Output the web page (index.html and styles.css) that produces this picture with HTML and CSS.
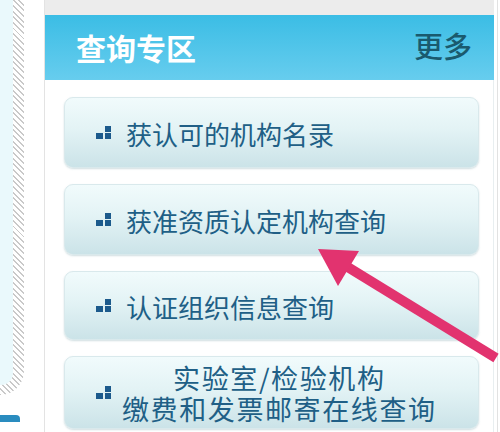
FILE: index.html
```html
<!DOCTYPE html>
<html lang="zh-CN">
<head>
<meta charset="utf-8">
<title>查询专区</title>
<link rel="stylesheet" href="styles.css">
</head>
<body>
<div class="page">
  <aside class="side">
    <div class="hatch"><div class="fill"></div></div>
    <div class="tab"></div>
  </aside>
  <main class="panel">
    <div class="topbar"></div>
    <header class="head">
      <span class="title">查询专区</span>
      <span class="more">更多</span>
    </header>
    <div class="body">
      <a class="btn b1"><svg class="ico" width="15" height="13" viewBox="0 0 15 13"><rect x="9" y="0" width="6" height="6"/><rect x="0" y="7" width="7" height="6"/><rect x="9" y="7" width="6" height="6"/></svg><span class="txt">获认可的机构名录</span></a>
      <a class="btn b2"><svg class="ico" width="15" height="13" viewBox="0 0 15 13"><rect x="9" y="0" width="6" height="6"/><rect x="0" y="7" width="7" height="6"/><rect x="9" y="7" width="6" height="6"/></svg><span class="txt">获准资质认定机构查询</span></a>
      <a class="btn b3"><svg class="ico" width="15" height="13" viewBox="0 0 15 13"><rect x="9" y="0" width="6" height="6"/><rect x="0" y="7" width="7" height="6"/><rect x="9" y="7" width="6" height="6"/></svg><span class="txt">认证组织信息查询</span></a>
      <a class="btn b4"><svg class="ico" width="15" height="13" viewBox="0 0 15 13"><rect x="9" y="0" width="6" height="6"/><rect x="0" y="7" width="7" height="6"/><rect x="9" y="7" width="6" height="6"/></svg><span class="txt two"><span class="ln">实验室/检验机构</span><span class="ln">缴费和发票邮寄在线查询</span></span></a>
    </div>
  </main>
  <div class="edge"></div>
</div>
<svg class="arrow" width="500" height="432" viewBox="0 0 500 432">
  <line x1="346" y1="266" x2="496" y2="358" stroke="#e2336f" stroke-width="10"/>
  <polygon points="318,249 359,251 338,286" fill="#e2336f"/>
</svg>
</body>
</html>
```
FILE: styles.css
```css
html, body {
  margin: 0;
  padding: 0;
  background: #ffffff;
}
body {
  width: 500px;
  height: 432px;
  overflow: hidden;
  position: relative;
  font-family: "Noto Sans CJK SC", "Noto Sans", sans-serif;
}
.page {
  display: flex;
  height: 432px;
}
.side {
  width: 44px;
  flex: none;
  border-right: 1px solid #e3e3e3;
  display: flex;
  flex-direction: column;
}
.hatch {
  width: 24px;
  height: 395px;
  padding: 0 11px 10px 0;
  box-sizing: border-box;
  border-bottom-right-radius: 24px;
  background: repeating-linear-gradient(45deg, #c9c9c9 0 1.4px, #ffffff 1.4px 4px);
}
.fill {
  height: 100%;
  background: #eaf9fc;
  border-bottom-right-radius: 12px;
}
.tab {
  margin-top: 20px;
  width: 20px;
  height: 7px;
  background: #2a8cbf;
  border-top-right-radius: 4px;
}
.panel {
  width: 449px;
  flex: none;
  display: flex;
  flex-direction: column;
}
.topbar {
  height: 15px;
  background: #ececec;
}
.head {
  height: 65px;
  background: linear-gradient(#3bbde5, #67cdee);
  display: flex;
  align-items: center;
  justify-content: space-between;
  padding: 0 22px 0 31px;
}
.title {
  color: #ffffff;
  font-size: 30px;
  font-weight: bold;
  line-height: 1;
  margin-top: -2px;
}
.more {
  color: #1a5a6e;
  font-size: 29px;
  font-weight: 500;
  line-height: 1;
  margin-top: -4px;
}
.body {
  flex: 1;
  padding: 17px 14px 0 19px;
  display: flex;
  flex-direction: column;
  gap: 16px;
  border-right: 1px solid #e8eef0;
}
.btn {
  display: flex;
  align-items: center;
  height: 71px;
  flex: none;
  box-sizing: border-box;
  padding-left: 31px;
  border: 1px solid #d9e9ec;
  border-radius: 9px;
  background: linear-gradient(#f1fbfc, #e3f3f5 45%, #cbe3e8);
  box-shadow: 0 1px 2px rgba(120, 160, 170, 0.35);
  color: #205f86;
}
.b3 { height: 69px; }
.b4 { height: 73px; }
.ico {
  fill: #1c5a8c;
  flex: none;
}
.txt {
  margin-left: 15px;
  font-size: 26px;
  line-height: 1;
  margin-top: 2px;
}
.txt.two {
  margin-left: 11px;
  font-size: 27px;
  letter-spacing: 1.6px;
  display: flex;
  flex-direction: column;
  align-items: center;
  gap: 4px;
  margin-top: 0;
}
.ln {
  display: block;
  line-height: 27px;
}
.edge {
  flex: 1;
  border-right: 1px solid #e2e2e2;
  margin-right: 2px;
}
.arrow {
  position: absolute;
  left: 0;
  top: 0;
}
```
